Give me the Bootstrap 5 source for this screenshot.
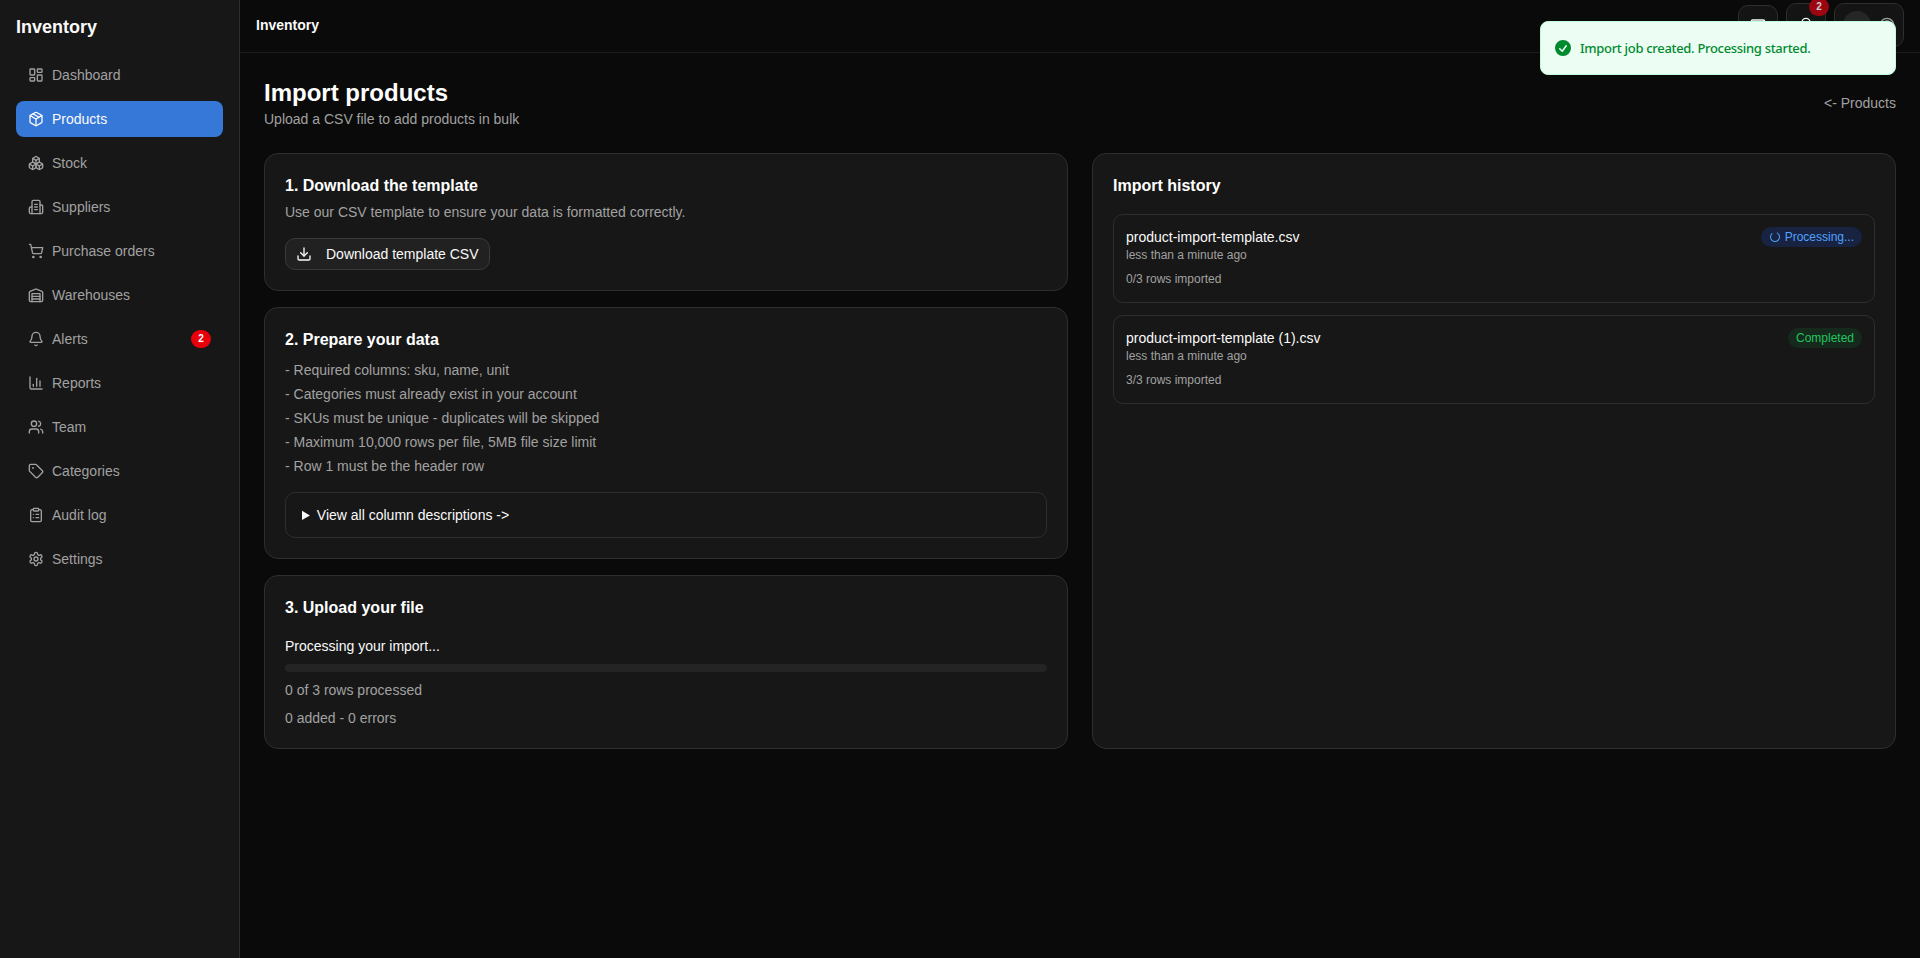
<!DOCTYPE html>
<html lang="en" data-bs-theme="dark">
<head>
<meta charset="utf-8">
<meta name="viewport" content="width=device-width, initial-scale=1">
<title>Import products</title>
<link href="https://cdn.jsdelivr.net/npm/bootstrap@5.3.0/dist/css/bootstrap.min.css" rel="stylesheet">
<style>
body{font-family:"Liberation Sans",Arial,sans-serif;font-size:14px;line-height:20px;background:#0a0a0a;color:#fafafa;overflow:hidden}
svg.ico{width:16px;height:16px;fill:none;stroke:currentColor;stroke-width:2;stroke-linecap:round;stroke-linejoin:round;flex-shrink:0}
.side{width:240px;background:#171717;border-right:1px solid #2e2e2e;flex-shrink:0}
.brand{font-size:18px;line-height:28px;padding-top:13px;margin-bottom:16px}
.side .nav{gap:8px}
.side .nav-link{height:36px;padding:0 12px;gap:8px;color:#a1a1a1;border-radius:8px}
.side .nav-link.active{background:#3578d8;color:#fafafa}
.cnt{width:20px;height:18px;border-radius:9px;background:#e7000b;color:#fff;font-size:10px;line-height:18px;text-align:center}
.top{height:53px;border-bottom:1px solid #1c1c22;padding-bottom:2px}
.tbtn{border:1px solid #2e2e2e;background:#141414;border-radius:10px;width:40px;height:40px}
.tbtn.tall{height:44px}
.tbtn.user{width:70px;gap:8px}
.tbtn .cnt{top:-6px;right:-4px;background:#9c0610;color:#ccc}
.avatar{width:28px;height:28px;background:#262626}
.page{padding:24px}
h1{font-size:24px;line-height:32px}
h2{font-size:16px;line-height:24px}
.dim{color:#a1a1a1}
.panel{background:#171717;border:1px solid #2e2e2e;border-radius:14px;padding:20px}
.dl{height:32px;padding:0 10px;gap:14px;background:#212121;border:1px solid #3a3a3a;border-radius:10px;color:#fafafa;font-size:14px;line-height:20px}
.box{border:1px solid #2e2e2e;border-radius:10px}
.box.cols{padding:12px 16px}
.box.job{padding:12px 12px 15px}
.jobs{gap:12px}
.xs{font-size:12px;line-height:16px}
.track{height:8px;background:#242424;border-radius:4px}
.tag{height:20px;padding:0 8px;gap:4px;border-radius:10px;font-size:12px}
.tag.run{background:#172341;color:#51a2ff}
.tag.ok{background:#15291d;color:#22c55e}
.tag .ico{width:12px;height:12px}
.note{top:21px;right:24px;width:356px;height:54px;background:#ecfdf3;border:1px solid #bffcd9;border-radius:8px;color:#008a2e;font:500 13px/20px "Noto Sans",sans-serif;letter-spacing:-.31px;padding:0 12px 1px;gap:7px;z-index:5}
</style>
</head>
<body>
<div class="d-flex vh-100">
  <aside class="side px-3">
    <div class="brand fw-bold">Inventory</div>
    <nav class="nav flex-column">
      <a class="nav-link d-flex align-items-center" href="#"><svg class="ico" viewBox="0 0 24 24"><rect width="7" height="9" x="3" y="3" rx="1"/><rect width="7" height="5" x="14" y="3" rx="1"/><rect width="7" height="9" x="14" y="12" rx="1"/><rect width="7" height="5" x="3" y="16" rx="1"/></svg>Dashboard</a>
      <a class="nav-link active d-flex align-items-center" href="#"><svg class="ico" viewBox="0 0 24 24"><path d="M11 21.73a2 2 0 0 0 2 0l7-4A2 2 0 0 0 21 16V8a2 2 0 0 0-1-1.73l-7-4a2 2 0 0 0-2 0l-7 4A2 2 0 0 0 3 8v8a2 2 0 0 0 1 1.73z"/><path d="M12 22V12"/><path d="M3.29 7 12 12l8.71-5"/><path d="m7.5 4.27 9 5.15"/></svg>Products</a>
      <a class="nav-link d-flex align-items-center" href="#"><svg class="ico" viewBox="0 0 24 24"><path d="M2.97 12.92A2 2 0 0 0 2 14.63v3.24a2 2 0 0 0 .97 1.71l3 1.8a2 2 0 0 0 2.06 0L12 19v-5.5l-5-3-4.03 2.42Z"/><path d="m7 16.5-4.74-2.85"/><path d="m7 16.5 5-3"/><path d="M7 16.5v5.17"/><path d="M12 13.5V19l3.97 2.38a2 2 0 0 0 2.06 0l3-1.8a2 2 0 0 0 .97-1.71v-3.24a2 2 0 0 0-.97-1.71L17 10.5l-5 3Z"/><path d="m17 16.5-5-3"/><path d="m17 16.5 4.74-2.85"/><path d="M17 16.5v5.17"/><path d="M7.97 4.42A2 2 0 0 0 7 6.13v4.37l5 3 5-3V6.13a2 2 0 0 0-.97-1.71l-3-1.8a2 2 0 0 0-2.06 0l-3 1.8Z"/><path d="M12 8 7.26 5.15"/><path d="m12 8 4.74-2.85"/><path d="M12 13.5V8"/></svg>Stock</a>
      <a class="nav-link d-flex align-items-center" href="#"><svg class="ico" viewBox="0 0 24 24"><path d="M10 12h4"/><path d="M10 8h4"/><path d="M10 16h4"/><path d="M6 22V4a2 2 0 0 1 2-2h8a2 2 0 0 1 2 2v18Z"/><path d="M6 12H4a2 2 0 0 0-2 2v6a2 2 0 0 0 2 2h2"/><path d="M18 9h2a2 2 0 0 1 2 2v9a2 2 0 0 1-2 2h-2"/></svg>Suppliers</a>
      <a class="nav-link d-flex align-items-center" href="#"><svg class="ico" viewBox="0 0 24 24"><circle cx="8" cy="21" r="1"/><circle cx="19" cy="21" r="1"/><path d="M2.05 2.05h2l2.66 12.42a2 2 0 0 0 2 1.58h9.78a2 2 0 0 0 1.95-1.57l1.65-7.43H5.12"/></svg>Purchase orders</a>
      <a class="nav-link d-flex align-items-center" href="#"><svg class="ico" viewBox="0 0 24 24"><path d="M22 8.35V20a2 2 0 0 1-2 2H4a2 2 0 0 1-2-2V8.35A2 2 0 0 1 3.26 6.5l8-3.2a2 2 0 0 1 1.48 0l8 3.2A2 2 0 0 1 22 8.35Z"/><path d="M6 18h12"/><path d="M6 14h12"/><path d="M6 22V10h12v12"/></svg>Warehouses</a>
      <a class="nav-link d-flex align-items-center" href="#"><svg class="ico" viewBox="0 0 24 24"><path d="M10.27 21a2 2 0 0 0 3.46 0"/><path d="M3.26 15.33A1 1 0 0 0 4 17h16a1 1 0 0 0 .74-1.67C19.41 13.96 18 12.5 18 8A6 6 0 0 0 6 8c0 4.5-1.41 5.96-2.74 7.33"/></svg>Alerts<span class="cnt fw-bold ms-auto">2</span></a>
      <a class="nav-link d-flex align-items-center" href="#"><svg class="ico" viewBox="0 0 24 24"><path d="M3 3v16a2 2 0 0 0 2 2h16"/><path d="M8 17v-3"/><path d="M13 17V5"/><path d="M18 17V9"/></svg>Reports</a>
      <a class="nav-link d-flex align-items-center" href="#"><svg class="ico" viewBox="0 0 24 24"><path d="M16 21v-2a4 4 0 0 0-4-4H6a4 4 0 0 0-4 4v2"/><circle cx="9" cy="7" r="4"/><path d="M22 21v-2a4 4 0 0 0-3-3.87"/><path d="M16 3.13a4 4 0 0 1 0 7.75"/></svg>Team</a>
      <a class="nav-link d-flex align-items-center" href="#"><svg class="ico" viewBox="0 0 24 24"><path d="M12.59 2.59A2 2 0 0 0 11.17 2H4a2 2 0 0 0-2 2v7.17a2 2 0 0 0 .59 1.42l8.7 8.7a2.43 2.43 0 0 0 3.42 0l6.58-6.58a2.43 2.43 0 0 0 0-3.42z"/><circle cx="7.5" cy="7.5" r=".5" fill="currentColor"/></svg>Categories</a>
      <a class="nav-link d-flex align-items-center" href="#"><svg class="ico" viewBox="0 0 24 24"><rect width="8" height="4" x="8" y="2" rx="1"/><path d="M16 4h2a2 2 0 0 1 2 2v14a2 2 0 0 1-2 2H6a2 2 0 0 1-2-2V6a2 2 0 0 1 2-2h2"/><path d="M12 11h4"/><path d="M12 16h4"/><path d="M8 11h.01"/><path d="M8 16h.01"/></svg>Audit log</a>
      <a class="nav-link d-flex align-items-center" href="#"><svg class="ico" viewBox="0 0 24 24"><path d="M12.22 2h-.44a2 2 0 0 0-2 2v.18a2 2 0 0 1-1 1.73l-.43.25a2 2 0 0 1-2 0l-.15-.08a2 2 0 0 0-2.73.73l-.22.38a2 2 0 0 0 .73 2.73l.15.1a2 2 0 0 1 1 1.72v.51a2 2 0 0 1-1 1.74l-.15.09a2 2 0 0 0-.73 2.73l.22.38a2 2 0 0 0 2.73.73l.15-.08a2 2 0 0 1 2 0l.43.25a2 2 0 0 1 1 1.73V20a2 2 0 0 0 2 2h.44a2 2 0 0 0 2-2v-.18a2 2 0 0 1 1-1.73l.43-.25a2 2 0 0 1 2 0l.15.08a2 2 0 0 0 2.73-.73l.22-.39a2 2 0 0 0-.73-2.73l-.15-.08a2 2 0 0 1-1-1.74v-.5a2 2 0 0 1 1-1.74l.15-.09a2 2 0 0 0 .73-2.73l-.22-.38a2 2 0 0 0-2.73-.73l-.15.08a2 2 0 0 1-2 0l-.43-.25a2 2 0 0 1-1-1.73V4a2 2 0 0 0-2-2z"/><circle cx="12" cy="12" r="3"/></svg>Settings</a>
    </nav>
  </aside>
  <div class="flex-grow-1">
    <header class="top d-flex align-items-center px-3 gap-2">
      <div class="fw-bold me-auto">Inventory</div>
      <div class="tbtn d-flex align-items-center justify-content-center"><svg class="ico" viewBox="0 0 24 24"><rect width="20" height="13" x="2" y="4.5" rx="2"/><path d="M8 21h8"/><path d="M12 17v4"/></svg></div>
      <div class="tbtn tall position-relative d-flex align-items-center justify-content-center"><svg class="ico" viewBox="0 0 24 24"><path d="M10.27 21a2 2 0 0 0 3.46 0"/><path d="M3.26 15.33A1 1 0 0 0 4 17h16a1 1 0 0 0 .74-1.67C19.41 13.96 18 12.5 18 8A6 6 0 0 0 6 8c0 4.5-1.41 5.96-2.74 7.33"/></svg><span class="cnt position-absolute fw-bold">2</span></div>
      <div class="tbtn tall user d-flex align-items-center justify-content-center"><span class="avatar rounded-circle"></span><svg class="ico dim" viewBox="0 0 24 24"><circle cx="12" cy="12" r="10"/><circle cx="12" cy="10" r="4"/><path d="M7 20.66V19a2 2 0 0 1 2-2h6a2 2 0 0 1 2 2v1.66"/></svg></div>
    </header>
    <main class="page">
      <div class="d-flex align-items-center justify-content-between mb-4">
        <div><h1 class="fw-bold mb-0">Import products</h1><div class="dim">Upload a CSV file to add products in bulk</div></div>
        <a class="dim text-decoration-none" href="#">&lt;- Products</a>
      </div>
      <div class="row gx-4">
        <div class="col-6 d-flex flex-column gap-3">
          <section class="panel">
            <h2 class="fw-bold mb-1">1. Download the template</h2>
            <div class="dim mb-3">Use our CSV template to ensure your data is formatted correctly.</div>
            <button class="dl btn d-inline-flex align-items-center"><svg class="ico" viewBox="0 0 24 24"><path d="M21 15v4a2 2 0 0 1-2 2H5a2 2 0 0 1-2-2v-4"/><path d="m7 10 5 5 5-5"/><path d="M12 15V3"/></svg>Download template CSV</button>
          </section>
          <section class="panel">
            <h2 class="fw-bold mb-2">2. Prepare your data</h2>
            <ul class="list-unstyled dim d-flex flex-column gap-1 mb-3">
              <li>- Required columns: sku, name, unit</li>
              <li>- Categories must already exist in your account</li>
              <li>- SKUs must be unique - duplicates will be skipped</li>
              <li>- Maximum 10,000 rows per file, 5MB file size limit</li>
              <li>- Row 1 must be the header row</li>
            </ul>
            <details class="box cols"><summary>View all column descriptions -&gt;</summary></details>
          </section>
          <section class="panel">
            <h2 class="fw-bold mb-3">3. Upload your file</h2>
            <div class="d-flex flex-column gap-2">
              <div>Processing your import...</div>
              <div class="track"></div>
              <div class="dim">0 of 3 rows processed</div>
              <div class="dim">0 added - 0 errors</div>
            </div>
          </section>
        </div>
        <div class="col-6">
          <section class="panel h-100">
            <h2 class="fw-bold mb-3">Import history</h2>
            <div class="jobs d-flex flex-column">
              <div class="box job">
                <div class="d-flex justify-content-between align-items-start mb-2">
                  <div><div>product-import-template.csv</div><div class="dim xs">less than a minute ago</div></div>
                  <span class="tag run d-inline-flex align-items-center"><svg class="ico" viewBox="0 0 24 24"><path d="M21 12a9 9 0 1 1-6.219-8.56" transform="rotate(-60 12 12)"/></svg>Processing...</span>
                </div>
                <div class="dim xs">0/3 rows imported</div>
              </div>
              <div class="box job">
                <div class="d-flex justify-content-between align-items-start mb-2">
                  <div><div>product-import-template (1).csv</div><div class="dim xs">less than a minute ago</div></div>
                  <span class="tag ok d-inline-flex align-items-center">Completed</span>
                </div>
                <div class="dim xs">3/3 rows imported</div>
              </div>
            </div>
          </section>
        </div>
      </div>
    </main>
  </div>
</div>
<div class="note position-fixed d-flex align-items-center"><svg width="20" height="20" viewBox="0 0 20 20" fill="currentColor"><path fill-rule="evenodd" clip-rule="evenodd" d="M10 18a8 8 0 1 0 0-16 8 8 0 0 0 0 16Zm3.857-9.809a.75.75 0 0 0-1.214-.882l-3.483 4.79-1.88-1.88a.75.75 0 1 0-1.06 1.061l2.5 2.5a.75.75 0 0 0 1.137-.089l4-5.5Z"/></svg><span>Import job created. Processing started.</span></div>
<script src="https://cdn.jsdelivr.net/npm/bootstrap@5.3.0/dist/js/bootstrap.bundle.min.js"></script>
</body>
</html>
